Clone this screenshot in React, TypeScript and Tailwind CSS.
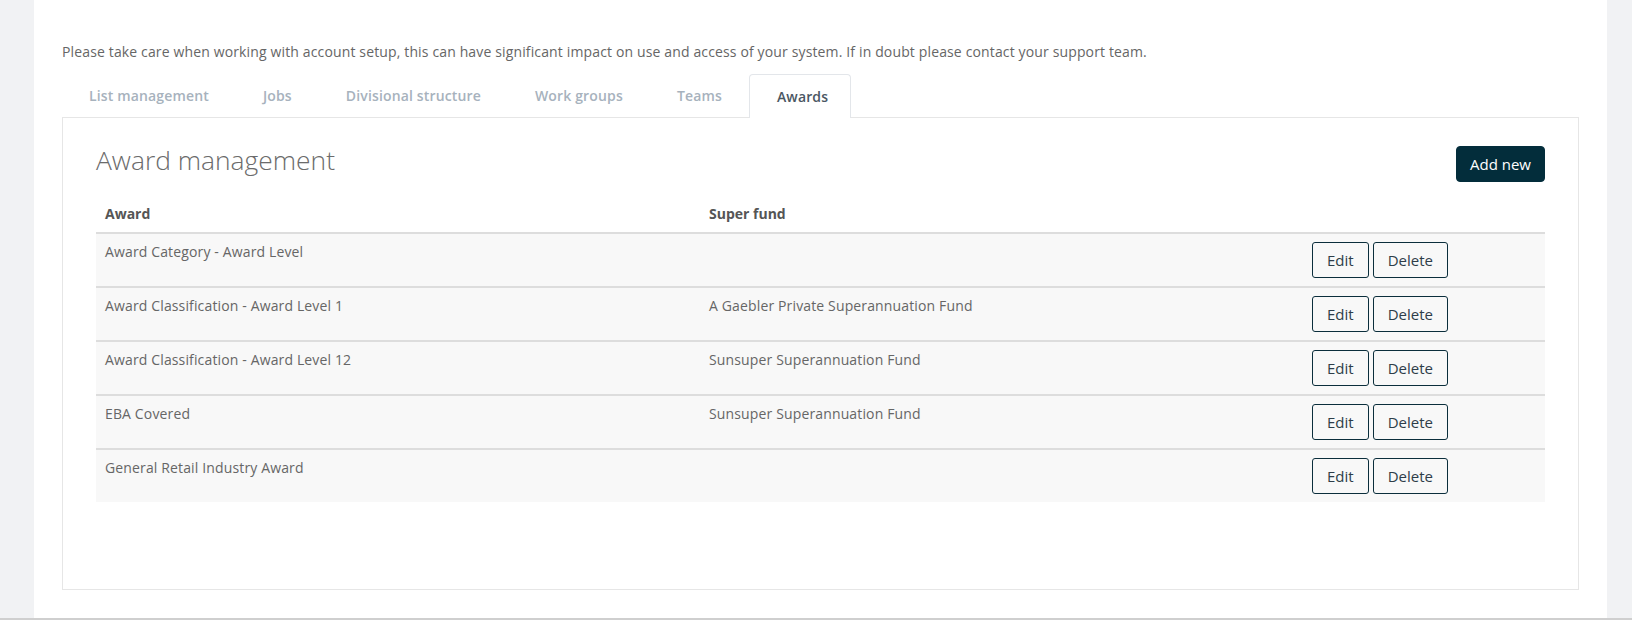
import React from 'react';

const tabs = ['List management', 'Jobs', 'Divisional structure', 'Work groups', 'Teams', 'Awards'];

const awards = [
  { name: 'Award Category - Award Level', fund: '' },
  { name: 'Award Classification - Award Level 1', fund: 'A Gaebler Private Superannuation Fund' },
  { name: 'Award Classification - Award Level 12', fund: 'Sunsuper Superannuation Fund' },
  { name: 'EBA Covered', fund: 'Sunsuper Superannuation Fund' },
  { name: 'General Retail Industry Award', fund: '' },
];

const RowButton = ({ label }: { label: string }) => (
  <button className="h-[36px] px-[14px] border border-[#0b2e3c] rounded-[3px] text-[15px] leading-5 text-[#2e3d49] bg-transparent">
    {label}
  </button>
);

export default function App() {
  const active = 'Awards';

  return (
    <div className="flex h-[620px] overflow-hidden bg-[#f1f2f4] border-b-2 border-[#cfcfcf] font-['Open_Sans','Liberation_Sans',sans-serif]">
      <div className="w-[34px] shrink-0" />

      <main className="w-[1573px] shrink-0 bg-white px-[28px] pt-[42px]">
        <p className="text-sm leading-5 tracking-[0.14px] text-[#666666]">
          Please take care when working with account setup, this can have significant impact on use and access of your system. If in doubt please contact your support team.
        </p>

        {/* Tabs */}
        <div className="mt-[12px] flex">
          {tabs.map((t) =>
            t === active ? (
              <div
                key={t}
                className="relative z-10 -mb-px flex h-[44px] items-center mr-[5px] pl-[27px] pr-[22px] rounded-t-[4px] border border-b-0 border-[#e3e6ea] bg-white text-sm font-semibold tracking-[0.15px] text-[#4b5763]"
              >
                {t}
              </div>
            ) : (
              <div
                key={t}
                className="-mb-px flex h-[44px] items-center mr-[5px] pl-[27px] pr-[22px] text-sm font-semibold tracking-[0.15px] text-[#a7b2bd]"
              >
                {t}
              </div>
            )
          )}
        </div>

        {/* Card */}
        <div className="border border-[#e6e6e6] bg-white px-[33px] pt-[28px] pb-[87px]">
          <div className="flex items-start justify-between">
            <h1 className="text-[26.4px] leading-[28px] font-light text-[#6b6b6b]">Award management</h1>
            <button className="h-[36px] px-[13px] rounded-[4px] border border-[#032d3b] bg-[#032d3b] text-[15px] leading-5 text-white">
              Add new
            </button>
          </div>

          {/* Table */}
          <div className="mt-[14px]">
            <div className="grid grid-cols-[604px_603px_1fr] border-b-2 border-[#dddddd] text-sm leading-5 font-bold text-[#555555]">
              <div className="px-[9px] py-2">Award</div>
              <div className="px-[9px] py-2">Super fund</div>
              <div className="px-[9px] py-2" />
            </div>
            {awards.map((a, i) => (
              <div
                key={a.name}
                className={
                  i < awards.length - 1
                    ? 'grid grid-cols-[604px_603px_1fr] bg-[#f8f8f8] border-b-2 border-[#dddddd] text-sm leading-5 tracking-[0.14px] text-[#666666]'
                    : 'grid grid-cols-[604px_603px_1fr] bg-[#f8f8f8] text-sm leading-5 tracking-[0.14px] text-[#666666]'
                }
              >
                <div className="px-[9px] py-2">{a.name}</div>
                <div className="px-[9px] py-2">{a.fund}</div>
                <div className="flex gap-[4px] px-[9px] py-2 tracking-normal">
                  <RowButton label="Edit" />
                  <RowButton label="Delete" />
                </div>
              </div>
            ))}
          </div>
        </div>
      </main>

      <div className="flex-1" />
    </div>
  );
}
